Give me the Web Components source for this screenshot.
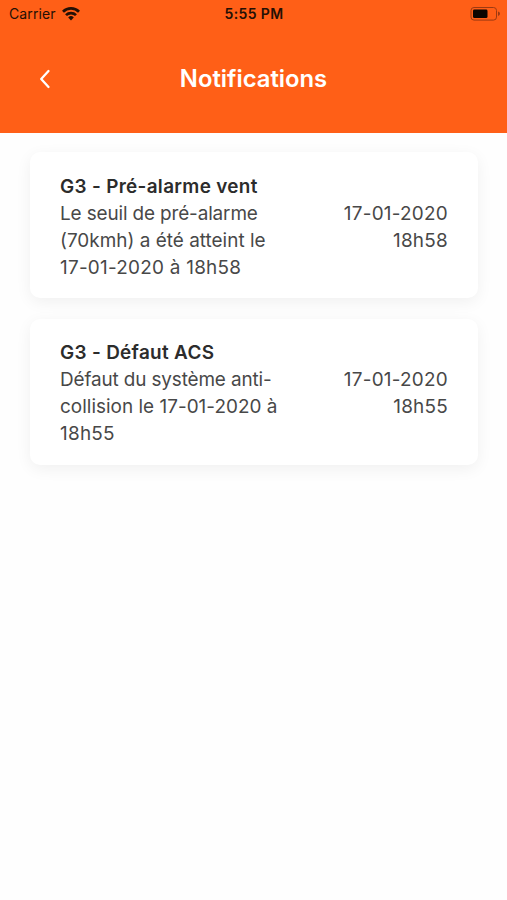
<!DOCTYPE html>
<html lang="fr">
<head>
<meta charset="utf-8">
<title>Notifications</title>
<style>
    body {
        margin: 0;
        min-height: 100vh;
        background: #fefefe;
        color: #484848;
        font-family: Inter, "Liberation Sans", sans-serif;
    }
    .line {
        display: block;
        white-space: nowrap;
        letter-spacing: -0.12px;
    }
    .line.wide { letter-spacing: 0.03px; }
    .line.digits { letter-spacing: 0.26px; }
</style>
</head>
<body>
<app-header>
    <status-bar slot="status" carrier="Carrier" time="5:55 PM"></status-bar>
    Notifications
</app-header>
<notification-list>
    <notification-card>
        <span slot="title">G3 - Pré-alarme vent</span>
        <span class="line">Le seuil de pré-alarme</span>
        <span class="line wide">(70kmh) a été atteint le</span>
        <span class="line digits">17-01-2020 à 18h58</span>
        <time slot="date">17-01-2020</time>
        <time slot="time">18h58</time>
    </notification-card>
    <notification-card>
        <span slot="title">G3 - Défaut ACS</span>
        <span class="line">Défaut du système anti-</span>
        <span class="line wide">collision le 17-01-2020 à</span>
        <span class="line digits">18h55</span>
        <time slot="date">17-01-2020</time>
        <time slot="time">18h55</time>
    </notification-card>
</notification-list>

<script>
const statusTemplate = document.createElement('template');

statusTemplate.innerHTML = `
<style>
:host {
    display: grid;
    grid-template-columns: 1fr auto 1fr;
    align-items: center;
    height: 27px;
    padding: 0 8px 0 9px;
    color: #241005;
    font-size: 14px;
    line-height: 27px;
}
.left { display: flex; align-items: center; gap: 6px; }
#carrier { letter-spacing: 0.1px; }
#time { font-weight: 600; letter-spacing: 0.4px; }
.battery { justify-self: end; margin-right: -2px; }
svg { display: block; }
</style>
<div class="left">
    <span id="carrier"></span>
    <svg width="18" height="14" viewBox="0 0 18 14" fill="none" stroke="#241005" stroke-width="2.7">
        <path d="M1 4.7a11.3 11.3 0 0 1 16 0"/>
        <path d="M4 8.1a7.1 7.1 0 0 1 10 0"/>
        <path d="M9 13.4 6.2 10.4a4 4 0 0 1 5.6 0z" fill="#241005" stroke="none"/>
    </svg>
</div>
<span id="time"></span>
<svg class="battery" width="31" height="14" viewBox="0 0 31 14">
    <rect x="1" y=".5" width="25.5" height="12.6" rx="3" fill="none" stroke="#9c3a12" stroke-width="1"/>
    <rect x="3" y="2.5" width="14.5" height="8.6" rx="1.4" fill="#0d0500"/>
    <path d="M28 4.6v4.4q2-.6 2-2.2t-2-2.2z" fill="#9c3a12"/>
</svg>`;

class StatusBar extends HTMLElement {
    constructor() {
        super();
        this.attachShadow({ mode: 'open' });
        this.shadowRoot.appendChild(statusTemplate.content.cloneNode(true));
    }

    connectedCallback() {
        this.shadowRoot.getElementById('carrier').textContent = this.getAttribute('carrier');
        this.shadowRoot.getElementById('time').textContent = this.getAttribute('time');
    }
}

const headerTemplate = document.createElement('template');

headerTemplate.innerHTML = `
<style>
:host {
    display: flex;
    flex-direction: column;
    height: 132.5px;
    background: #ff5f17;
    color: #fff;
}
.bar {
    display: grid;
    grid-template-columns: 90px 1fr 90px;
    align-items: center;
    height: 104px;
}
svg { display: block; margin-left: 38px; }
h1 {
    margin: 0;
    text-align: center;
    font-size: 23.8px;
    font-weight: 600;
    line-height: 30px;
}
</style>
<slot name="status"></slot>
<div class="bar">
    <svg width="14" height="22" viewBox="0 0 14 22" fill="none" stroke="#fff" stroke-width="2.3" stroke-linecap="round" stroke-linejoin="round" role="img" aria-label="Retour">
        <path d="M10.5 3 3.2 11l7.3 8"/>
    </svg>
    <h1><slot></slot></h1>
</div>`;

class AppHeader extends HTMLElement {
    constructor() {
        super();
        this.attachShadow({ mode: 'open' });
        this.shadowRoot.appendChild(headerTemplate.content.cloneNode(true));
    }
}

const listTemplate = document.createElement('template');

listTemplate.innerHTML = `
<style>
:host {
    display: flex;
    flex-direction: column;
    gap: 20.4px;
    padding: 19.5px 29px 20px 30px;
}
</style>
<slot></slot>`;

class NotificationList extends HTMLElement {
    constructor() {
        super();
        this.attachShadow({ mode: 'open' });
        this.shadowRoot.appendChild(listTemplate.content.cloneNode(true));
    }
}

const cardTemplate = document.createElement('template');

cardTemplate.innerHTML = `
<style>
:host {
    display: grid;
    grid-template-columns: 224px 1fr;
    grid-template-rows: 27px 81px;
    box-sizing: border-box;
    height: 146.3px;
    padding: 20.5px 30px 17.5px;
    border-radius: 10px;
    background: #fff;
    box-shadow: 0 4px 16px rgba(0, 0, 0, 0.06);
    font-size: 18.9px;
    line-height: 27px;
}
.title {
    grid-column: 1 / -1;
    color: #2c2c2c;
    font-weight: 600;
    letter-spacing: 0.33px;
}
.when {
    display: flex;
    flex-direction: column;
    text-align: right;
    letter-spacing: 0.26px;
}
</style>
<div class="title"><slot name="title"></slot></div>
<div class="text"><slot></slot></div>
<div class="when">
    <slot name="date"></slot>
    <slot name="time"></slot>
</div>`;

class NotificationCard extends HTMLElement {
    constructor() {
        super();
        this.attachShadow({ mode: 'open' });
        this.shadowRoot.appendChild(cardTemplate.content.cloneNode(true));
    }
}

customElements.define('status-bar', StatusBar);
customElements.define('app-header', AppHeader);
customElements.define('notification-list', NotificationList);
customElements.define('notification-card', NotificationCard);
</script>
</body>
</html>
